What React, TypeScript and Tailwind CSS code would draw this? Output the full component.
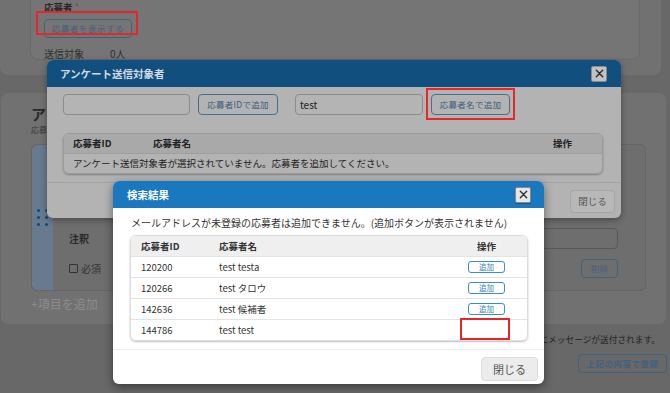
import React from 'react';

const rows = [
  { id: '120200', name: 'test testa', canAdd: true },
  { id: '120266', name: 'test タロウ', canAdd: true },
  { id: '142636', name: 'test 候補者', canAdd: true },
  { id: '144786', name: 'test test', canAdd: false },
];

function CloseIcon({ color }: { color: string }) {
  return (
    <svg width="9" height="9" viewBox="0 0 10 10">
      <path d="M1.5 1.5 L8.5 8.5 M8.5 1.5 L1.5 8.5" stroke={color} strokeWidth="1.6" strokeLinecap="round" />
    </svg>
  );
}

function PageBehind() {
  return (
    <div className="flex flex-col">
      {/* 応募者 card */}
      <div className="w-[662px] h-[76px] rounded-b-lg bg-[#717171] pl-[30px] border-r border-b border-[#686868]">
        <div className="w-[610px] h-[60px] rounded-b-lg bg-[#757575] border border-t-0 border-[#6a6a6a] pl-[13px]">
          <div className="pt-[1px] text-[9.5px] leading-[12px] font-bold text-[#282828]">
            応募者 <span className="text-[#8a4848] font-normal">*</span>
          </div>
          <button className="h-[19px] w-[88px] rounded border border-[#3f627f] text-[8.5px] tracking-[0.5px] text-[#3f627f]">
            応募者を表示する
          </button>
          <div className="mt-[10px] flex text-[10px] leading-[12px] text-[#2e2e2e]">
            <span className="w-[66px]">送信対象</span>
            <span>0人</span>
          </div>
        </div>
      </div>

      {/* アンケート項目 card */}
      <div className="mt-[16px] w-[667px] h-[233px] rounded-lg bg-[#717171] border border-[#686868] px-[30px] pt-[11px]">
        <div className="text-[15px] leading-[20px] font-bold text-[#2a2a2a]">アンケート項目</div>
        <div className="text-[8px] leading-[12px] text-[#3a3a3a]">応募者に回答してもらうアンケート項目を設定します。</div>
        <div className="mt-[8px] flex w-[615px] h-[147px] rounded-md bg-[#6e6e6e] border border-[#666666]">
          <div className="w-[21px] rounded-l-md bg-[#687a8d] flex items-center justify-center">
            <div className="grid grid-cols-2 gap-x-[5px] gap-y-[4px]">
              {Array.from({ length: 6 }).map((_, i) => (
                <span key={i} className="w-[3px] h-[3px] rounded-full bg-[#0e4a78]" />
              ))}
            </div>
          </div>
          <div className="flex-1 pl-[16px] pr-[27px] pt-[83px]">
            <div className="flex h-[21px] items-center justify-between">
              <span className="text-[10px] font-bold text-[#2a2a2a]">注釈</span>
              <div className="w-[300px] h-[21px] rounded border border-[#585858] bg-[#6e6e6e]" />
            </div>
            <div className="mt-[10px] flex h-[19px] items-center justify-between">
              <label className="flex items-center gap-[3px] text-[10px] text-[#323232]">
                <span className="w-[9px] h-[9px] border border-[#323232] rounded-[1px]" />
                必須
              </label>
              <button className="w-[37px] h-[19px] rounded border border-[#3f627f] text-[8.5px] text-[#3f627f]">削除</button>
            </div>
          </div>
        </div>
        <div className="mt-[3px] text-[12px] leading-[20px] text-[#8c8c8c]">+項目を追加</div>
      </div>

      <div className="mt-[8px] flex justify-end pr-[10px] text-[8.7px] leading-[14px] text-[#242424]">
        登録すると、選択した応募者にメッセージが送付されます。
      </div>
      <div className="mt-[7px] flex justify-end pr-[3px]">
        <button className="w-[89px] h-[19px] rounded border border-[#3f627f] text-[8.5px] font-bold tracking-[0.5px] text-[#3f627f]">
          上記の内容で登録
        </button>
      </div>
    </div>
  );
}

function TargetModal() {
  return (
    <div className="absolute left-[47px] top-[60px] w-[574px] h-[158px] rounded-md bg-[#b3b3b3] shadow-[0_2px_6px_rgba(0,0,0,0.35)] flex flex-col">
      <div className="h-[27px] rounded-t-md bg-[#114f7e] pl-[13px] pr-[14px] flex items-center justify-between">
        <span className="text-[10.5px] font-bold text-[#d4dbe2]">アンケート送信対象者</span>
        <span className="w-[16px] h-[16px] rounded-[2px] bg-[#c2c2c2] border border-[#8a8a8a] flex items-center justify-center">
          <CloseIcon color="#2a2a2a" />
        </span>
      </div>
      <div className="px-[16px] pt-[7px]">
        <div className="flex items-center">
          <div className="w-[127px] h-[21px] rounded border border-[#8c8c8c] bg-[#b4b4b4]" />
          <button className="ml-[8px] w-[80px] h-[21px] rounded border border-[#4a6f8e] text-[8.5px] tracking-[0.3px] text-[#3a5e7e]">
            応募者IDで追加
          </button>
          <div className="ml-[17px] w-[128px] h-[21px] rounded border border-[#8c8c8c] bg-[#b4b4b4] pl-[4px] text-[10px] leading-[19px] text-[#1e1e1e]">
            test
          </div>
          <button className="ml-[8px] w-[79px] h-[21px] rounded border border-[#4a6f8e] text-[8.5px] tracking-[0.3px] text-[#3a5e7e]">
            応募者名で追加
          </button>
        </div>
        <div className="mt-[18px] w-[540px] rounded-md border border-[#9c9c9c] shadow-[0_1px_2px_rgba(0,0,0,0.3)] text-[9.5px] text-[#222]">
          <div className="h-[20px] rounded-t-md bg-[#a9a9a9] border-b border-[#9e9e9e] flex items-center font-bold">
            <span className="w-[89px] pl-[9px]">応募者ID</span>
            <span className="flex-1">応募者名</span>
            <span className="pr-[30px]">操作</span>
          </div>
          <div className="h-[19px] flex items-center pl-[9px]">
            アンケート送信対象者が選択されていません。応募者を追加してください。
          </div>
        </div>
      </div>
      <div className="mt-[8px] border-t border-[#a3a3a3] flex justify-end pt-[7px] pr-[6px]">
        <button className="w-[45px] h-[23px] rounded bg-[#b8b8b8] border border-[#a6a6a6] text-[9.5px] text-[#555]">閉じる</button>
      </div>
    </div>
  );
}

function ResultModal() {
  return (
    <div className="absolute left-[113px] top-[181px] w-[431px] h-[203px] rounded-md bg-white shadow-[0_3px_10px_rgba(0,0,0,0.45)] flex flex-col">
      <div className="h-[27px] rounded-t-md bg-[#1a78be] pl-[14px] pr-[13px] flex items-center justify-between">
        <span className="text-[10.5px] font-bold text-white">検索結果</span>
        <span className="w-[16px] h-[16px] rounded-[2px] bg-[#e6e6e6] border border-[#8a8a8a] shadow-[0_1px_1px_rgba(0,0,0,0.3)] flex items-center justify-center">
          <CloseIcon color="#333" />
        </span>
      </div>
      <div className="pl-[18px] pt-[8px] text-[10px] leading-[14px] text-[#333]">
        メールアドレスが未登録の応募者は追加できません。(追加ボタンが表示されません)
      </div>
      <div className="ml-[17px] mt-[5px] w-[398px] rounded-md border border-[#dcdcdc] shadow-[0_1px_2px_rgba(0,0,0,0.25)] text-[9.5px] text-[#333]">
        <div className="h-[20px] rounded-t-md bg-[#efefef] grid grid-cols-[88px_1fr_81px] items-center font-bold">
          <span className="pl-[10px]">応募者ID</span>
          <span>応募者名</span>
          <span className="text-center">操作</span>
        </div>
        {rows.map((r) => (
          <div key={r.id} className="h-[21px] border-t border-[#e3e3e3] grid grid-cols-[88px_1fr_81px] items-center">
            <span className="pl-[10px]">{r.id}</span>
            <span>{r.name}</span>
            <span className="flex justify-center">
              {r.canAdd && (
                <button className="w-[37px] h-[12px] rounded-[3px] border border-[#3a8ed0] bg-white text-[7.5px] leading-[10px] text-[#2f80c2]">
                  追加
                </button>
              )}
            </span>
          </div>
        ))}
      </div>
      <div className="mt-[8px] border-t border-[#ececec] flex justify-end pt-[7px] pr-[6px]">
        <button className="w-[57px] h-[24px] rounded bg-[#ececec] border border-[#dcdcdc] text-[11px] text-[#555]">閉じる</button>
      </div>
    </div>
  );
}

export default function App() {
  return (
    <div className="relative w-[670px] h-[393px] overflow-hidden bg-[#686868] font-['Noto_Sans_CJK_JP',sans-serif]">
      <PageBehind />
      <TargetModal />
      <ResultModal />
      {/* annotation boxes */}
      <div className="absolute left-[36px] top-[11px] w-[102px] h-[24px] border-2 border-[#e8262a]" />
      <div className="absolute left-[426px] top-[88px] w-[89px] h-[32px] border-2 border-[#e8262a]" />
      <div className="absolute left-[460px] top-[318px] w-[50px] h-[22px] border-2 border-[#e8262a]" />
    </div>
  );
}
